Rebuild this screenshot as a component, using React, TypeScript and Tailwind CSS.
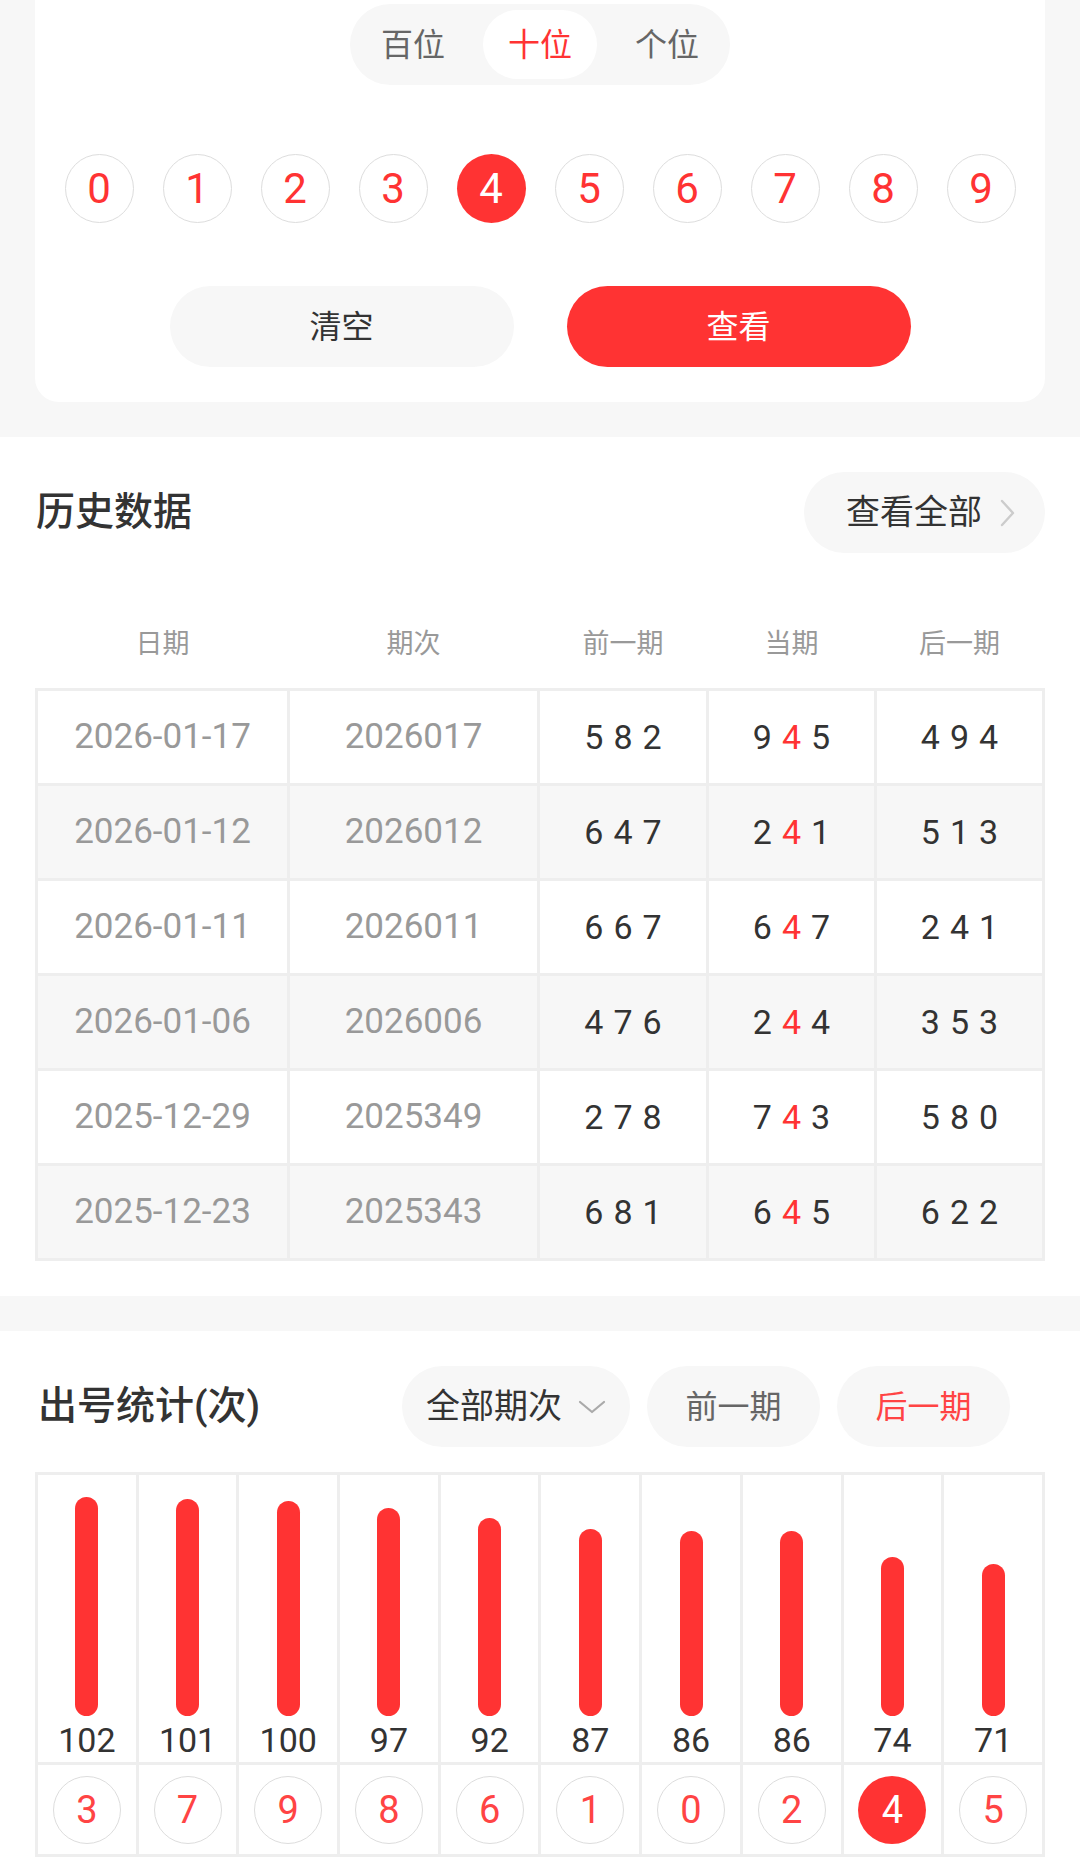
import { useState } from 'react';

const FONT = { fontFamily: 'Roboto, "Noto Sans CJK SC", sans-serif' };

const TABS = ['百位', '十位', '个位'];

const HISTORY = [
    { date: '2026-01-17', issue: '2026017', prev: '582', cur: '945', next: '494' },
    { date: '2026-01-12', issue: '2026012', prev: '647', cur: '241', next: '513' },
    { date: '2026-01-11', issue: '2026011', prev: '667', cur: '647', next: '241' },
    { date: '2026-01-06', issue: '2026006', prev: '476', cur: '244', next: '353' },
    { date: '2025-12-29', issue: '2025349', prev: '278', cur: '743', next: '580' },
    { date: '2025-12-23', issue: '2025343', prev: '681', cur: '645', next: '622' },
];

const STATS = [
    { num: 3, count: 102 },
    { num: 7, count: 101 },
    { num: 9, count: 100 },
    { num: 8, count: 97 },
    { num: 6, count: 92 },
    { num: 1, count: 87 },
    { num: 0, count: 86 },
    { num: 2, count: 86 },
    { num: 4, count: 74 },
    { num: 5, count: 71 },
];

const COLS = 'grid-cols-[249px_247px_166px_165px_165px]';

function Digits({ value, hi }: { value: string; hi?: number }) {
    return (
        <div className="flex items-center gap-[10px] text-[34px] text-[#333]">
            {value.split('').map((d, i) => (
                <span key={i} className={i === hi ? 'text-[#ff3333]' : ''}>
                    {d}
                </span>
            ))}
        </div>
    );
}

export default function App() {
    const [tab, setTab] = useState(1);
    const [picked, setPicked] = useState(4);
    const [mode, setMode] = useState(2);
    const max = Math.max(...STATS.map((s) => s.count));

    return (
        <div className="w-[1080px] bg-white" style={FONT}>
            {/* Picker card */}
            <div className="bg-[#f7f7f7] px-[35px] pb-[35px]">
                <div className="rounded-b-[24px] bg-white pt-[4px] pb-[35px]">
                    <div className="flex justify-center">
                        <div className="flex h-[81px] gap-[13px] rounded-full bg-[#f7f7f7] p-[6px]">
                            {TABS.map((t, i) => (
                                <button
                                    key={t}
                                    onClick={() => setTab(i)}
                                    className={`w-[114px] rounded-full text-[32px] ${
                                        tab === i ? 'bg-white text-[#ff3333]' : 'text-[#666]'
                                    }`}
                                >
                                    {t}
                                </button>
                            ))}
                        </div>
                    </div>

                    <div className="mt-[69px] flex justify-center gap-[29px]">
                        {Array.from({ length: 10 }, (_, n) => (
                            <button
                                key={n}
                                onClick={() => setPicked(n)}
                                className={`flex h-[69px] w-[69px] items-center justify-center rounded-full text-[42px] leading-none ${
                                    picked === n ? 'bg-[#ff3333] text-white' : 'border border-[#dddddd] text-[#ff3333]'
                                }`}
                            >
                                {n}
                            </button>
                        ))}
                    </div>

                    <div className="mt-[63px] flex justify-center gap-[53px]">
                        <button className="h-[81px] w-[344px] rounded-full bg-[#f7f7f7] text-[32px] text-[#333]">清空</button>
                        <button className="h-[81px] w-[344px] rounded-full bg-[#ff3333] text-[32px] text-white">查看</button>
                    </div>
                </div>
            </div>

            {/* History */}
            <div className="px-[35px] pt-[35px] pb-[35px]">
                <div className="flex items-center justify-between">
                    <h2 className="pl-[1px] text-[39px] font-medium text-[#333]">历史数据</h2>
                    <button className="flex h-[81px] items-center gap-[18px] rounded-full bg-[#f7f7f7] pr-[30px] pl-[42px] text-[34px] text-[#333]">
                        查看全部
                        <svg width="15" height="28" viewBox="0 0 15 28" fill="none">
                            <path d="M2 2l11 12L2 26" stroke="#cccccc" strokeWidth="2.4" strokeLinecap="round" strokeLinejoin="round" />
                        </svg>
                    </button>
                </div>

                <div className={`mt-[47px] grid h-[88px] px-[3px] ${COLS} gap-x-[3px] text-[27px] text-[#999]`}>
                    {['日期', '期次', '前一期', '当期', '后一期'].map((h) => (
                        <div key={h} className="flex items-center justify-center">
                            {h}
                        </div>
                    ))}
                </div>

                <div className={`grid ${COLS} gap-[3px] bg-[#eeeeee] p-[3px]`}>
                    {HISTORY.map((r, i) => {
                        const bg = i % 2 === 1 ? 'bg-[#f7f7f7]' : 'bg-white';
                        const cell = `flex h-[92px] items-center justify-center ${bg}`;
                        return [
                            <div key={`${i}a`} className={`${cell} text-[35px] text-[#999]`}>
                                {r.date}
                            </div>,
                            <div key={`${i}b`} className={`${cell} text-[35px] text-[#999]`}>
                                {r.issue}
                            </div>,
                            <div key={`${i}c`} className={cell}>
                                <Digits value={r.prev} />
                            </div>,
                            <div key={`${i}d`} className={cell}>
                                <Digits value={r.cur} hi={1} />
                            </div>,
                            <div key={`${i}e`} className={cell}>
                                <Digits value={r.next} />
                            </div>,
                        ];
                    })}
                </div>
            </div>

            <div className="h-[35px] bg-[#f7f7f7]" />

            {/* Stats */}
            <div className="px-[35px] pt-[35px] pb-[5px]">
                <div className="flex items-center justify-between">
                    <h2 className="pl-[3px] text-[39px] font-medium text-[#333]">出号统计(次)</h2>
                    <div className="flex gap-[17px] pr-[35px]">
                        <button
                            onClick={() => setMode(0)}
                            className="flex h-[81px] w-[228px] items-center justify-center gap-[16px] rounded-full bg-[#f7f7f7] text-[34px] text-[#333]"
                        >
                            全部期次
                            <svg width="28" height="14" viewBox="0 0 28 14" fill="none">
                                <path d="M2 2l12 10L26 2" stroke="#aaaaaa" strokeWidth="2.2" strokeLinecap="round" strokeLinejoin="round" />
                            </svg>
                        </button>
                        <button
                            onClick={() => setMode(1)}
                            className={`h-[81px] w-[173px] rounded-full bg-[#f7f7f7] text-[32px] ${mode === 1 ? 'text-[#ff4444]' : 'text-[#666]'}`}
                        >
                            前一期
                        </button>
                        <button
                            onClick={() => setMode(2)}
                            className={`h-[81px] w-[173px] rounded-full bg-[#f7f7f7] text-[32px] ${mode === 2 ? 'text-[#ff4444]' : 'text-[#666]'}`}
                        >
                            后一期
                        </button>
                    </div>
                </div>

                <div className="mt-[25px] grid grid-cols-10 gap-[3px] bg-[#eeeeee] p-[3px]">
                    {STATS.map((s) => (
                        <div key={`b${s.num}`} className="flex h-[287px] flex-col items-center justify-end bg-white pb-[2px]">
                            <div className="w-[23px] rounded-full bg-[#ff3333]" style={{ height: Math.round((s.count / max) * 219) }} />
                            <div className="mt-[4px] h-[40px] text-[34px] leading-[40px] text-[#333]">{s.count}</div>
                        </div>
                    ))}
                    {STATS.map((s) => (
                        <div key={`n${s.num}`} className="flex h-[89px] items-center justify-center bg-white">
                            <div
                                className={`flex h-[68px] w-[68px] items-center justify-center rounded-full text-[38px] leading-none ${
                                    s.num === picked ? 'bg-[#ff3333] text-white' : 'border border-[#dddddd] text-[#ff4444]'
                                }`}
                            >
                                {s.num}
                            </div>
                        </div>
                    ))}
                </div>
            </div>
        </div>
    );
}
